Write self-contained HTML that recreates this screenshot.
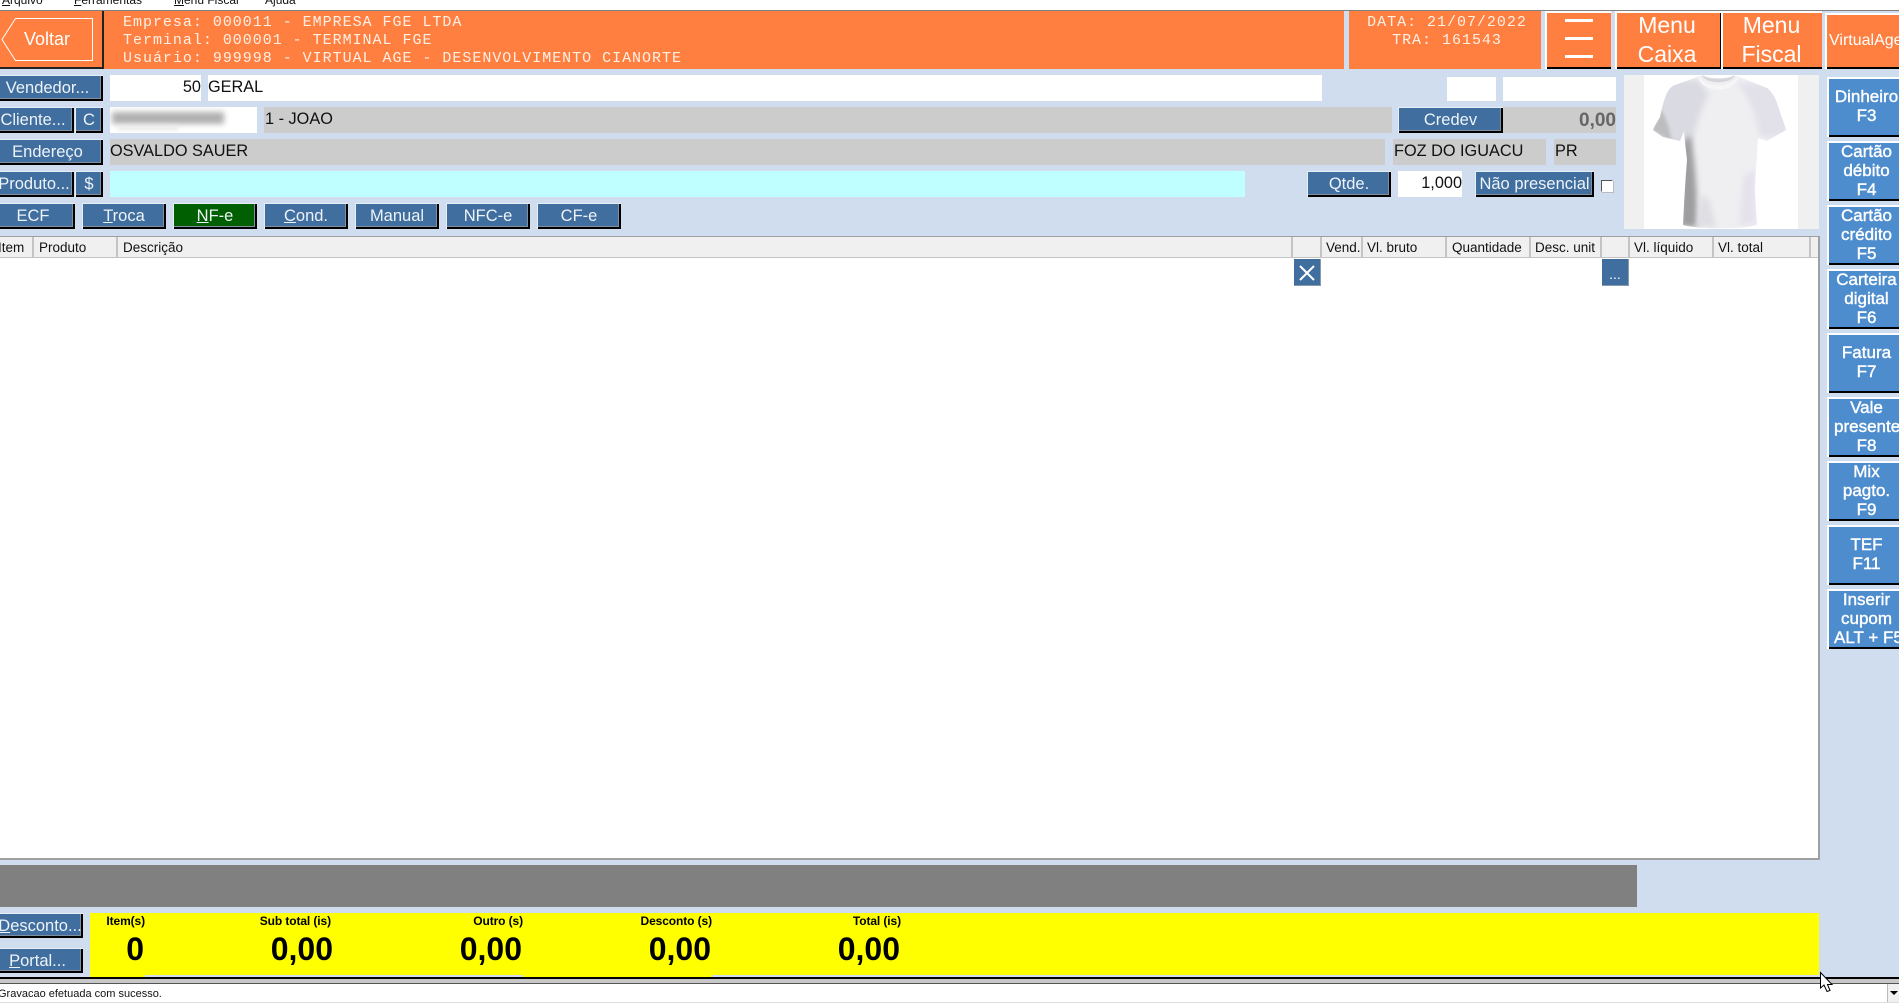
<!DOCTYPE html>
<html><head><meta charset="utf-8"><style>
html,body{margin:0;padding:0;width:1899px;height:1003px;overflow:hidden;background:#CFDDEE;font-family:"Liberation Sans",Arial,sans-serif}
div,span.a{position:absolute;box-sizing:border-box}
.b{background:#3F6E9F;color:#EEF3F8;font-size:16.5px;text-align:center;line-height:27px;height:26px;white-space:nowrap;box-shadow:inset 1px 1px 0 #e8eef5,inset -2px -2px 0 #000,inset -3px -3px 0 #7f8f9f}
.f{background:#fff;height:26px;font-size:16.3px;line-height:25px;color:#111;white-space:nowrap}
.g{background:#CCC;height:26px;font-size:16.3px;line-height:25px;color:#111;white-space:nowrap}
.o{background:#FF7F40}
.m{font-family:"Liberation Mono",monospace;font-size:15px;letter-spacing:.98px;color:#FFF0E6;line-height:18px;white-space:pre}
.big{top:11px;height:58px;color:#fff;background:#FF7F40;text-align:center;font-size:23px;line-height:28.5px;box-shadow:inset 2px 2px 0 #fff,inset 0 -2px 0 #000;padding-top:0}
.r{left:1827px;width:72px;height:60px;background:#4D8CCD;color:#fff;text-align:center;font-size:17px;line-height:19px;-webkit-text-stroke:.4px #fff;box-shadow:inset 2px 2px 0 #fff,inset 0 -2px 0 #000;white-space:nowrap;overflow:hidden;padding-left:7px}
.h{top:237px;height:21px;font-size:13.5px;line-height:22px;color:#111;background:#F0F0F0;border-right:2px solid #c4c4c4;padding-left:4px;white-space:nowrap;overflow:hidden}
.l{top:915px;font-size:12px;font-weight:bold;color:#000;text-align:right;line-height:13px;white-space:nowrap;letter-spacing:-.1px}
.v{top:931px;font-size:32px;font-weight:bold;color:#000;text-align:right;line-height:36px;white-space:nowrap}
.t{top:0;font-size:12px;line-height:12px;margin-top:-6px;color:#111;white-space:nowrap}
</style></head><body>
<!-- top menu -->
<div style="left:0;top:0;width:1899px;height:10px;background:#fff;overflow:hidden">
<div class="t" style="left:2px"><u>A</u>rquivo</div>
<div class="t" style="left:74px"><u>F</u>erramentas</div>
<div class="t" style="left:174px"><u>M</u>enu Fiscal</div>
<div class="t" style="left:265px">A<u>j</u>uda</div>
</div>
<div style="left:0;top:10px;width:1899px;height:1px;background:#808080"></div>
<!-- header -->
<div class="o" style="left:0;top:11px;width:1344px;height:58px"></div>
<div style="left:102px;top:11px;width:2px;height:58px;background:#222"></div>
<div style="left:0;top:67px;width:104px;height:2px;background:#222"></div>
<svg style="position:absolute;left:0;top:11px" width="104" height="58"><path d="M15.500 7.500H92.500V49.500H15.500L2 28.500Z" fill="none" stroke="#fff" stroke-width="1"/></svg>
<div style="left:15px;top:27px;width:64px;text-align:center;color:#fff;font-size:18px;line-height:24px">Voltar</div>
<div class="m" style="left:123px;top:14px">Empresa: 000011 - EMPRESA FGE LTDA
Terminal: 000001 - TERMINAL FGE
Usuário: 999998 - VIRTUAL AGE - DESENVOLVIMENTO CIANORTE</div>
<div class="o" style="left:1349px;top:11px;width:192px;height:58px"></div>
<div class="m" style="left:1349px;top:14px;width:196px;text-align:center">DATA: 21/07/2022
TRA: 161543</div>
<div class="big" style="left:1545px;width:66px"></div>
<div style="left:1565px;top:19px;width:28px;height:3px;background:#fff"></div>
<div style="left:1565px;top:37px;width:28px;height:3px;background:#fff"></div>
<div style="left:1565px;top:55px;width:28px;height:3px;background:#fff"></div>
<div class="big" style="left:1615px;width:106px;padding-right:2px;box-shadow:inset 2px 2px 0 #fff,inset 0 -2px 0 #000,inset -1px 0 0 #000">Menu<br>Caixa</div>
<div class="big" style="left:1721px;width:101px">Menu<br>Fiscal</div>
<div class="big" style="left:1825px;top:13px;width:74px;height:56px;font-size:16px;line-height:56px;text-align:left;padding-left:4px;overflow:hidden;white-space:nowrap">VirtualAge</div>
<!-- row 1 -->
<div class="b" style="left:-8px;top:75px;width:111px">Vendedor...</div>
<div class="f" style="left:110px;top:75px;width:91px;text-align:right">50</div>
<div class="f" style="left:208px;top:75px;width:1114px">GERAL</div>
<div class="f" style="left:1447px;top:77px;width:49px;height:24px"></div>
<div class="f" style="left:1503px;top:77px;width:113px;height:24px"></div>
<!-- row 2 -->
<div class="b" style="left:-8px;top:107px;width:82px">Cliente...</div>
<div class="b" style="left:75px;top:107px;width:28px">C</div>
<div class="f" style="left:110px;top:107px;width:147px;overflow:hidden">
<div style="left:2px;top:5px;width:112px;height:12px;background:#b0b0b0;filter:blur(3px)"></div>
<div style="left:8px;top:19px;width:60px;height:4px;background:#e8e8e8;filter:blur(2px)"></div></div>
<div class="g" style="left:264px;top:107px;width:1128px;padding-left:1px">1 - JOAO</div>
<div class="b" style="left:1398px;top:107px;width:105px">Credev</div>
<div class="g" style="left:1503px;top:107px;width:113px;text-align:right;font-weight:bold;color:#666;font-size:19px;line-height:27px">0,00</div>
<!-- row 3 -->
<div class="b" style="left:-8px;top:139px;width:111px">Endereço</div>
<div class="g" style="left:110px;top:139px;width:1275px">OSVALDO SAUER</div>
<div class="g" style="left:1393px;top:139px;width:153px;padding-left:1px">FOZ DO IGUACU</div>
<div class="g" style="left:1554px;top:139px;width:62px;padding-left:1px">PR</div>
<!-- row 4 -->
<div class="b" style="left:-6px;top:171px;width:80px">Produto...</div>
<div class="b" style="left:75px;top:171px;width:28px">$</div>
<div style="left:110px;top:171px;width:1135px;height:26px;background:#BFFFFF"></div>
<div class="b" style="left:1307px;top:171px;width:84px">Qtde.</div>
<div class="f" style="left:1398px;top:171px;width:64px;text-align:right">1,000</div>
<div class="b" style="left:1475px;top:171px;width:119px">Não presencial</div>
<div style="left:1601px;top:180px;width:12px;height:12px;background:#fff;border:1px solid #555;border-right-color:#fff;border-bottom-color:#fff;box-shadow:1px 1px 0 #bbb"></div>
<!-- row 5 -->
<div class="b" style="left:-9px;top:203px;width:84px">ECF</div>
<div class="b" style="left:82px;top:203px;width:84px"><u>T</u>roca</div>
<div class="b" style="left:173px;top:203px;width:84px;background:#005F00"><u>N</u>F-e</div>
<div class="b" style="left:264px;top:203px;width:84px"><u>C</u>ond.</div>
<div class="b" style="left:355px;top:203px;width:84px">Manual</div>
<div class="b" style="left:446px;top:203px;width:84px">NFC-e</div>
<div class="b" style="left:537px;top:203px;width:84px">CF-e</div>
<!-- shirt -->
<div style="left:1624px;top:75px;width:195px;height:154px;background:#F0F0F0"></div>
<div style="left:1644px;top:75px;width:154px;height:154px;background:#fff"></div>
<svg style="position:absolute;left:1624px;top:75px" width="195" height="154" viewBox="0 0 195 154">
<defs>
<filter id="bl" x="-30%" y="-30%" width="160%" height="160%"><feGaussianBlur stdDeviation="3"/></filter>
<filter id="bs" x="-30%" y="-30%" width="160%" height="160%"><feGaussianBlur stdDeviation="1.500"/></filter>
<clipPath id="c"><path d="M79 0C82 4 107 4 110 0L143 13C147 16 151 22 153 28C156 38 160 47 162 55L143 66L134 63C133 85 131 100 131 118L133 150C118 154 80 155 59 150C60 130 61 110 63 85C62 75 61 68 60 56L56 66L39 62L29 55C32 48 34 46 36 42C38 32 40 25 43 18C45 14 48 11 51 10Z"/></clipPath>
</defs>
<g clip-path="url(#c)">
<rect width="195" height="154" fill="#EFEFF1"/>
<path d="M25 5H75L85 20C75 35 70 60 66 80L60 70H25Z" fill="#DADAE2" filter="url(#bl)"/>
<path d="M112 8H165V62H136C132 40 125 20 112 8Z" fill="#E2E0E9" filter="url(#bl)"/>
<path d="M27 55L38 35L44 50L48 66Z" fill="#BDBDC0" filter="url(#bs)"/>
<path d="M57 70L66 60C72 85 73 125 74 152H56Z" fill="#9E9EA0" filter="url(#bl)"/>
<path d="M120 100L132 95V150H115Z" fill="#E6E2EC" filter="url(#bl)"/>
<path d="M77 120L85 125L92 152H72Z" fill="#DEDEE4" filter="url(#bl)"/>
<path d="M75 0C80 14 108 14 114 0V4C108 18 82 18 75 5Z" fill="#F6F6F8"/>
<path d="M79 0C82 5 107 5 110 0V2C104 9 85 9 79 2Z" fill="#D4D4DA"/>
</g>
</svg>
<!-- right buttons -->
<div class="r" style="top:77px;padding-top:10px">Dinheiro<br>F3</div>
<div class="r" style="top:141px;padding-top:1px">Cartão<br>débito<br>F4</div>
<div class="r" style="top:205px;padding-top:1px">Cartão<br>crédito<br>F5</div>
<div class="r" style="top:269px;padding-top:1px">Carteira<br>digital<br>F6</div>
<div class="r" style="top:333px;padding-top:10px">Fatura<br>F7</div>
<div class="r" style="top:397px;padding-top:1px">Vale<br>presente<br>F8</div>
<div class="r" style="top:461px;padding-top:1px">Mix<br>pagto.<br>F9</div>
<div class="r" style="top:525px;padding-top:10px">TEF<br>F11</div>
<div class="r" style="top:589px;padding-top:1px">Inserir<br>cupom<br>ALT + F5</div>
<!-- table -->
<div style="left:0;top:236px;width:1820px;height:624px;background:#fff;border-top:1px solid #a0a0a0;border-right:2px solid #a0a0a0;border-bottom:2px solid #a0a0a0"></div>
<div class="h" style="left:0;width:34px;padding-left:0;text-indent:-2px">Item</div>
<div class="h" style="left:34px;width:84px;padding-left:5px">Produto</div>
<div class="h" style="left:118px;width:1175px;padding-left:5px">Descrição</div>
<div class="h" style="left:1293px;width:29px"></div>
<div class="h" style="left:1322px;width:41px">Vend.</div>
<div class="h" style="left:1363px;width:84px">Vl. bruto</div>
<div class="h" style="left:1447px;width:84px;padding-left:5px">Quantidade</div>
<div class="h" style="left:1531px;width:71px">Desc. unit</div>
<div class="h" style="left:1602px;width:28px"></div>
<div class="h" style="left:1630px;width:84px">Vl. líquido</div>
<div class="h" style="left:1714px;width:97px">Vl. total</div>
<div class="h" style="left:1811px;width:7px;border-right:0"></div>
<div style="left:0;top:257px;width:1818px;height:1px;background:#c4c4c4"></div>
<div style="left:1294px;top:259px;width:27px;height:27px;background:#3F6E9F;border-right:1px solid #8a9aaa;border-bottom:1px solid #8a9aaa"></div>
<svg style="position:absolute;left:1294px;top:259px" width="27" height="27"><path d="M6 7L20 21M20 7L6 21" stroke="#fff" stroke-width="2" fill="none"/></svg>
<div style="left:1602px;top:259px;width:27px;height:27px;background:#3F6E9F;border-right:1px solid #8a9aaa;border-bottom:1px solid #8a9aaa;color:#fff;font-size:14px;line-height:30px;text-align:center">...</div>
<!-- bottom -->
<div style="left:0;top:865px;width:1637px;height:42px;background:#808080"></div>
<div style="left:90px;top:913px;width:1729px;height:62px;background:#FF0"></div>
<div style="left:90px;top:975px;width:55px;height:2px;background:#FF0"></div>
<div style="left:523px;top:975px;width:189px;height:2px;background:#FF0"></div>
<div class="b" style="left:-3px;top:913px;width:86px;height:25px;overflow:hidden"><u>D</u>esconto...</div>
<div class="b" style="left:-8px;top:948px;width:91px;height:25px"><u>P</u>ortal...</div>
<div class="l" style="left:45px;width:100px">Item(s)</div>
<div class="l" style="left:231px;width:100px">Sub total (is)</div>
<div class="l" style="left:423px;width:100px">Outro (s)</div>
<div class="l" style="left:612px;width:100px">Desconto (s)</div>
<div class="l" style="left:801px;width:100px">Total (is)</div>
<div class="v" style="left:44px;width:100px">0</div>
<div class="v" style="left:233px;width:100px">0,00</div>
<div class="v" style="left:422px;width:100px">0,00</div>
<div class="v" style="left:611px;width:100px">0,00</div>
<div class="v" style="left:800px;width:100px">0,00</div>
<!-- status -->
<div style="left:0;top:977px;width:1899px;height:2px;background:#000"></div>
<div style="left:0;top:979px;width:1899px;height:4px;background:#C8C8C8"></div>
<div style="left:0;top:983px;width:1899px;height:1px;background:#555"></div>
<div style="left:0;top:984px;width:1899px;height:19px;background:#fff;border-bottom:1px solid #ddd"></div>
<div style="left:-2px;top:987px;font-size:11px;line-height:14px;color:#111;white-space:nowrap">Gravacao efetuada com sucesso.</div>
<div style="left:1887px;top:984px;width:12px;height:18px;background:#f0f0f0;border-left:1px solid #bbb"></div>
<svg style="position:absolute;left:1889px;top:990px" width="10" height="6"><path d="M1 1H9L5 5Z" fill="#000"/></svg>
<svg style="position:absolute;left:1819px;top:971px" width="16" height="22"><path d="M1.500 1.500V17L5 14L8 20.500L11 19.500L8.500 13.500H13Z" fill="#fff" stroke="#000" stroke-width="1"/></svg>
</body></html>
